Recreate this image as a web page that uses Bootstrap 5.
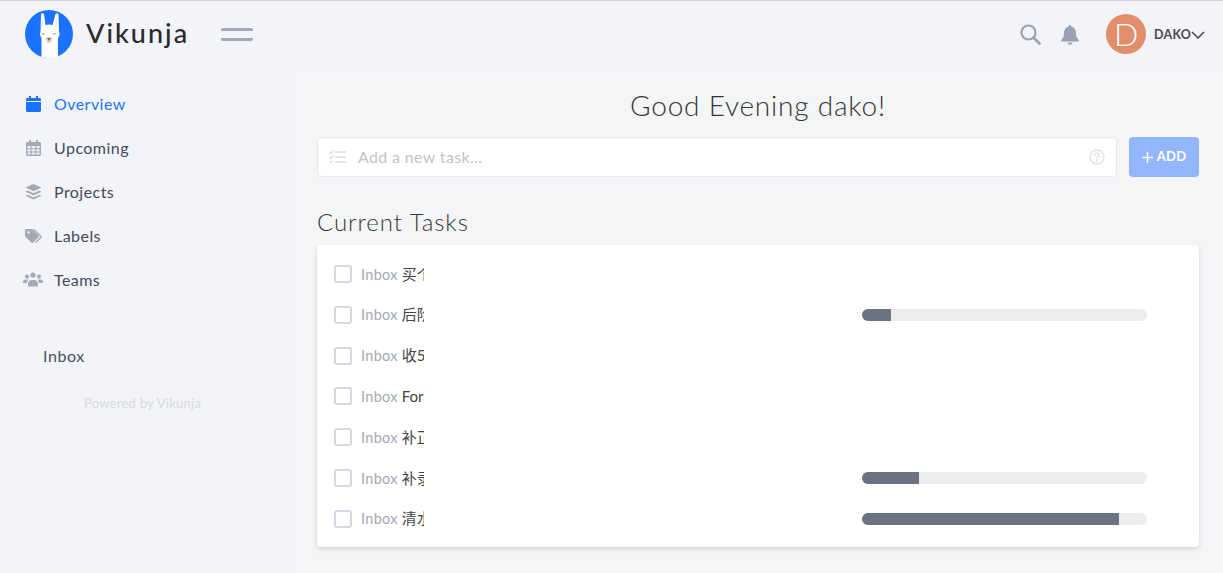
<!DOCTYPE html>
<html lang="en">
<head>
<meta charset="utf-8">
<title>Vikunja</title>
<link rel="stylesheet" href="https://cdn.jsdelivr.net/npm/bootstrap@5.3.0/dist/css/bootstrap.min.css">
<style>
html,body{height:100%;overflow:hidden}
body{background:#f4f5f7;font-family:"Lato","Noto Sans CJK SC",sans-serif;color:#363636;border-top:1px solid #cfcfd2}
.vk-top{height:67px;background:#f2f4f9;padding:0 18px 0 25px}
.vk-logo{width:48px;height:48px;margin-top:-2px}
.vk-word{font-size:27px;font-weight:500;letter-spacing:2px;color:#2b2b2b;margin-left:13px;line-height:1;margin-top:-4px}
.vk-burger{width:32px;margin-left:32px;height:13px;border-top:3px solid #a3a9b6;border-bottom:3px solid #a3a9b6;border-radius:2px;margin-top:-1px}
.vk-avatar{width:40px;height:40px;background:#e18e6b;color:#fff;font-size:32px;line-height:40px;text-align:center;font-weight:300;margin-left:27px;margin-top:-1px}
.vk-user{font-size:12.5px;font-weight:700;color:#4a4a4a;margin-left:8px;letter-spacing:.2px;padding-top:1px}
.vk-ic{color:#9aa2b1;display:block}
.vk-gap{margin-right:20px}
.vk-side{width:291px;background:#f2f4f9;height:505px;flex:none;padding-top:14px}
.vk-item{height:44px;padding-left:22px;font-size:16px;letter-spacing:.45px;color:#444a5c;text-decoration:none}
.vk-item.on{color:#1973ff}
.vk-slot{width:22px;margin-right:10px}
.vk-inbox{padding:42px 0 0 43px;font-size:16px;letter-spacing:.6px;color:#4a4f5f;line-height:24px}
.vk-pow{margin:27px 0 0 84px;font-size:13px;color:#d6d8dd;line-height:16px;letter-spacing:.25px}
.vk-main{padding:0 24px 0 26px;min-width:0}
.vk-hello{font-size:28px;font-weight:300;text-align:center;margin:0;line-height:36px;padding-top:19px;color:#363636;letter-spacing:.8px}
.vk-addrow{margin-top:14px;gap:12px}
.vk-input{height:40px;background:#fff;border:1px solid #e8e9ee;border-radius:4px;padding:0 11px;color:#c0c3c9;font-size:16px}
.vk-input span{margin-left:12px;letter-spacing:.35px}
.vk-add{width:70px;height:40px;background:#93b5fe;border:0;border-radius:4px;color:#fff;font-size:13px;font-weight:700;padding:0;letter-spacing:.3px}
.vk-h3{font-size:24px;font-weight:300;margin:26px 0 0;line-height:38px;color:#363636;letter-spacing:.95px;height:42px}
.vk-card{background:#fff;border-radius:4px;box-shadow:0 2px 4px rgba(40,50,80,.18);padding:8.6px 52px 0 17px;height:302px;border:0}
.vk-row{height:40.8px}
.vk-check{width:18px;height:18px;border:2px solid #d5d8e0;border-radius:3px;flex:none;background:#fff}
.vk-title{width:63px;margin-left:9px;white-space:nowrap;overflow:hidden;font-size:15px;color:#444}
.vk-title i{font-style:normal;color:#a5a9b6;font-size:14.5px;margin-right:4px;letter-spacing:.3px}
.vk-bar{width:285px;height:12px;background:#ededed;border-radius:6px;margin-left:auto}
.vk-bar .progress-bar{background:#6b7280}
</style>
</head>
<body>
<header class="vk-top d-flex align-items-center">
  <svg class="vk-logo" viewBox="0 0 48 48" role="img" aria-label="Vikunja logo">
    <circle cx="24" cy="24" r="24" fill="#1973ff"/>
    <path d="M16.500 47V28c-1.500-2-1.800-4-1-6L16 4c1-1 2-1 3 0l1.500 11c2.500-.8 4.500-.8 7 0L30.500 4c1-1 2-1 3 0l.5 18c1 2 .5 4-1 6v19c-5 1.500-11 1.500-16.500 0z" fill="#fff"/>
    <path d="M17.300 7l-.5 9 1.700.5zM32 7l-2 10 1.800-.5z" fill="#f3dede"/>
    <path d="M20.500 28c2-2 5-2 7 0 .5 3-1.500 5-3.500 5s-4-2-3.500-5z" fill="#e7dcc9"/>
    <path d="M22.500 28.500h3l-1.500 1.500zM24 30v1.500" fill="#5b4a3f" stroke="#5b4a3f" stroke-width=".5"/>
    <path d="M17 23.500l3 .8M31 23.500l-3 .8" stroke="#777" stroke-width=".8" fill="none"/>
  </svg>
  <span class="vk-word">Vikunja</span>
  <div class="vk-burger"></div>
  <div class="ms-auto d-flex align-items-center">
    <svg class="vk-ic vk-gap" width="21" height="21" viewBox="0 0 21 21" fill="none" stroke="currentColor" stroke-width="2.200"><circle cx="8.500" cy="8.500" r="7"/><path d="M13.500 13.500l6 6" stroke-linecap="round" stroke-width="2.800"/></svg>
    <svg class="vk-ic" width="18" height="20" viewBox="0 0 18 20" fill="currentColor"><path d="M9 0c1 0 1.500.7 1.500 1.700C13.500 2.300 15 4.800 15 8c0 4 1.300 5.500 2.600 6.800.6.700.2 1.700-.7 1.700H1.100c-.9 0-1.300-1-.7-1.700C1.700 13.500 3 12 3 8c0-3.200 1.500-5.700 4.500-6.300C7.500.7 8 0 9 0z"/><path d="M6.800 17.500h4.400c0 1.300-1 2.300-2.200 2.300s-2.200-1-2.200-2.300z"/></svg>
    <div class="vk-avatar rounded-circle">D</div>
    <span class="vk-user">DAKO</span>
    <svg width="14" height="8" viewBox="0 0 14 8" fill="none" stroke="#444" stroke-width="1.500"><path d="M1 1l6 6 6-6"/></svg>
  </div>
</header>
<div class="d-flex">
  <nav class="vk-side">
    <a class="vk-item on d-flex align-items-center" href="#"><span class="vk-slot d-flex justify-content-center"><svg width="15" height="16" viewBox="0 0 15 16" fill="#1973ff"><path d="M3 0h2v2h5V0h2v2h1.500c.8 0 1.500.7 1.500 1.500V5H0V3.500C0 2.700.7 2 1.500 2H3zM0 6h15v8.500c0 .8-.7 1.500-1.500 1.500h-12C.7 16 0 15.300 0 14.500z"/></svg></span>Overview</a>
    <a class="vk-item d-flex align-items-center" href="#"><span class="vk-slot d-flex justify-content-center"><svg width="15" height="16" viewBox="0 0 15 16" fill="#a3a9b6"><path fill-rule="evenodd" d="M3 0h2v2h5V0h2v2h1.500c.8 0 1.500.7 1.500 1.500v11c0 .8-.7 1.500-1.500 1.500h-12C.7 16 0 15.300 0 14.500v-11C0 2.700.7 2 1.500 2H3zM1.500 6v2.200h3V6zm4.200 0v2.200h3.600V6zm4.800 0v2.200h3V6zM1.500 9.200v2.200h3V9.200zm4.200 0v2.200h3.600V9.200zm4.800 0v2.200h3V9.200zM1.500 12.500v2h3v-2zm4.200 0v2h3.600v-2zm4.800 0v2h3v-2z"/></svg></span>Upcoming</a>
    <a class="vk-item d-flex align-items-center" href="#"><span class="vk-slot d-flex justify-content-center"><svg width="17" height="16" viewBox="0 0 17 16" fill="#a3a9b6"><path d="M8.500 0l8 3.500-8 3.700-8-3.700z"/><path d="M2.500 6.500l6 2.700 6-2.700 2 1.200-8 3.700-8-3.700z"/><path d="M2.500 10.700l6 2.700 6-2.700 2 1.100-8 3.700-8-3.700z"/></svg></span>Projects</a>
    <a class="vk-item d-flex align-items-center" href="#"><span class="vk-slot d-flex justify-content-center"><svg width="17" height="15" viewBox="0 0 17 15" fill="#a3a9b6"><path fill-rule="evenodd" d="M1 0h5.500c.5 0 1 .2 1.300.5l5.700 5.700c.6.600.6 1.500 0 2.100l-5.200 5.200c-.6.600-1.500.6-2.100 0L.5 7.800C.2 7.500 0 7 0 6.500V1c0-.5.500-1 1-1zm2.500 2.200a1.300 1.300 0 100 2.600 1.300 1.300 0 000-2.600z"/><path d="M9.500 0l6.800 6.800c.6.600.6 1.500 0 2.100l-5.100 5.100-.9-.9 5-5c.2-.2.200-.5 0-.7L8 0z"/></svg></span>Labels</a>
    <a class="vk-item d-flex align-items-center" href="#"><span class="vk-slot d-flex justify-content-center"><svg width="20" height="16" viewBox="0 0 20 16" fill="#a3a9b6"><circle cx="4" cy="4.500" r="2"/><circle cx="16" cy="4.500" r="2"/><circle cx="10" cy="3" r="2.600"/><path d="M0 10c0-1.500 1-2.500 2.500-2.500h2c.4 0 .8.100 1.100.3C4.500 8.600 4 10 4 11H1c-.6 0-1-.4-1-1zM20 10c0-1.500-1-2.500-2.500-2.500h-2c-.4 0-.8.100-1.100.3 1.100.8 1.600 2.200 1.600 3.200h3c.6 0 1-.4 1-1z"/><path d="M5 12c0-2 1.500-4 3.500-4h3c2 0 3.500 2 3.500 4v1.500c0 .5-.4.900-.9.900H5.900c-.5 0-.9-.4-.9-.9z"/></svg></span>Teams</a>
    <div class="vk-inbox">Inbox</div>
    <div class="vk-pow">Powered by Vikunja</div>
  </nav>
  <main class="vk-main flex-grow-1">
    <h1 class="vk-hello">Good Evening dako!</h1>
    <div class="vk-addrow d-flex">
      <div class="vk-input flex-grow-1 d-flex align-items-center">
        <svg width="17" height="14" viewBox="0 0 17 14" fill="none" stroke="#dcdee3" stroke-width="1.400"><path d="M6 2h11M6 7h11M6 12h11M.5 2l1.500 1.500L4.500.5M.5 7l1.500 1.500L4.500 5.500M1 12h2.500" /></svg>
        <span>Add a new task...</span>
        <svg class="ms-auto" width="16" height="16" viewBox="0 0 16 16" fill="none" stroke="#e1e3e8" stroke-width="1.500"><circle cx="8" cy="8" r="7"/><path d="M5.800 6.300c0-1.300 1-2 2.200-2s2.200.8 2.200 1.900c0 1.600-2.200 1.500-2.200 3.100"/><circle cx="8" cy="11.500" r=".5"/></svg>
      </div>
      <button class="vk-add btn d-flex align-items-center justify-content-center" type="button"><svg class="me-1" width="11" height="11" viewBox="0 0 11 11" stroke="#fff" stroke-width="1.500"><path d="M5.500 0v11M0 5.500h11"/></svg>ADD</button>
    </div>
    <h3 class="vk-h3">Current Tasks</h3>
    <div class="vk-card card">
      <div class="vk-row d-flex align-items-center"><span class="vk-check"></span><span class="vk-title"><i>Inbox</i>买个新</span></div>
      <div class="vk-row d-flex align-items-center"><span class="vk-check"></span><span class="vk-title"><i>Inbox</i>后阶段</span><div class="vk-bar progress"><div class="progress-bar" style="width:10%"></div></div></div>
      <div class="vk-row d-flex align-items-center"><span class="vk-check"></span><span class="vk-title"><i>Inbox</i>收5月</span></div>
      <div class="vk-row d-flex align-items-center"><span class="vk-check"></span><span class="vk-title"><i>Inbox</i>Format</span></div>
      <div class="vk-row d-flex align-items-center"><span class="vk-check"></span><span class="vk-title"><i>Inbox</i>补正式</span></div>
      <div class="vk-row d-flex align-items-center"><span class="vk-check"></span><span class="vk-title"><i>Inbox</i>补录入</span><div class="vk-bar progress"><div class="progress-bar" style="width:20%"></div></div></div>
      <div class="vk-row d-flex align-items-center"><span class="vk-check"></span><span class="vk-title"><i>Inbox</i>清水费</span><div class="vk-bar progress"><div class="progress-bar" style="width:90%"></div></div></div>
    </div>
  </main>
</div>
<script src="https://cdn.jsdelivr.net/npm/bootstrap@5.3.0/dist/js/bootstrap.bundle.min.js"></script>
</body>
</html>
